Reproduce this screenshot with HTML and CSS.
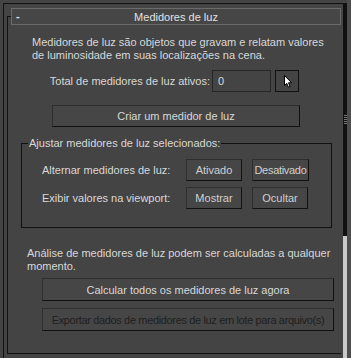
FILE: index.html
```html
<!DOCTYPE html>
<html lang="pt-BR">
<head>
    <meta charset="UTF-8">
    <meta name="viewport" content="width=device-width, initial-scale=1.0">
    <title>Medidores de luz</title>
    <link rel="stylesheet" href="styles.css">
</head>
<body>
    <div class="frame">
        <div class="rollout">
            <div class="rollout-header">
                <span class="toggle">-</span>
                <span class="rollout-title">Medidores de luz</span>
                <span></span>
            </div>

            <p class="info">Medidores de luz são objetos que gravam e relatam valores<br>de luminosidade em suas localizações na cena.</p>

            <div class="count-row">
                <span class="count-label">Total de medidores de luz ativos:</span>
                <div class="spinner">0</div>
                <button class="pick">
                    <svg width="9" height="13" viewBox="0 0 9 13">
                        <path d="M0.5 0.5 L0.5 10.5 L2.8 8.4 L4.4 12.2 L6 11.5 L4.5 7.8 L7.6 7.8 Z" fill="#fff" stroke="#000" stroke-width="1"/>
                    </svg>
                </button>
            </div>

            <button class="btn create">Criar um medidor de luz</button>

            <div class="group">
                <div class="group-label">Ajustar medidores de luz selecionados:</div>
                <div class="group-row">
                    <span class="row-label">Alternar medidores de luz:</span>
                    <button class="btn small">Ativado</button>
                    <button class="btn small tight">Desativado</button>
                </div>
                <div class="group-row">
                    <span class="row-label">Exibir valores na viewport:</span>
                    <button class="btn small">Mostrar</button>
                    <button class="btn small">Ocultar</button>
                </div>
            </div>

            <p class="info bottom">Análise de medidores de luz podem ser calculadas a qualquer<br>momento.</p>

            <button class="btn full">Calcular todos os medidores de luz agora</button>
            <button class="btn full export">Exportar dados de medidores de luz em lote para arquivo(s)</button>
        </div>
    </div>

    <div class="scrollbar">
        <div class="scroll-dark"><div class="grip"></div></div>
        <div class="scroll-light"></div>
    </div>
    <div class="edge"></div>
</body>
</html>
```

FILE: styles.css
```css
body {
    margin: 0;
    width: 351px;
    height: 358px;
    overflow: hidden;
    display: flex;
    background: #444444;
    font-family: "Liberation Sans", Arial, sans-serif;
    font-size: 11px;
    color: #d8d8d8;
}

.frame {
    box-sizing: border-box;
    width: 340px;
    margin: 3px 0 0 3px;
    padding: 12px 0 0 3px;
    border-top: 1px solid #111;
    border-left: 1px solid #111;
}

.rollout {
    box-sizing: border-box;
    width: 334px;
    height: 338px;
    border-top: 1px solid #111;
    border-left: 1px solid #111;
    border-bottom: 1px solid #111;
}

.rollout-header {
    box-sizing: border-box;
    height: 17px;
    margin: -9px 0 0 3px;
    border: 1px solid #6b6b6b;
    background: #464646;
    display: grid;
    grid-template-columns: 1fr auto 1fr;
    align-items: center;
    color: #e2e2e2;
}

.toggle {
    padding-left: 4px;
    font-weight: bold;
    line-height: 13px;
}

.info {
    margin: 11px 0 0 24px;
    line-height: 13px;
}

.count-row {
    display: flex;
    align-items: center;
    height: 22px;
    margin-top: 8px;
}

.count-label {
    flex: none;
    width: 202px;
    margin-right: 2px;
    text-align: right;
    white-space: nowrap;
}

.spinner {
    box-sizing: border-box;
    width: 59px;
    height: 22px;
    padding-left: 5px;
    line-height: 20px;
    border: 1px solid #262626;
}

.pick {
    box-sizing: border-box;
    width: 24px;
    height: 22px;
    margin-left: 4px;
    padding: 4px 0 0 8px;
    border: 1px solid #111;
    background: #444444;
    display: flex;
    align-items: flex-start;
}

.btn {
    display: block;
    box-sizing: border-box;
    height: 22px;
    padding: 0;
    font-family: inherit;
    font-size: 11px;
    color: #d8d8d8;
    background: #464646;
    border: 1px solid;
    border-color: #2e2e2e #111 #111 #2e2e2e;
    white-space: nowrap;
    overflow: hidden;
}

.create {
    width: 248px;
    margin: 13px 0 0 44px;
}

.group {
    box-sizing: border-box;
    width: 311px;
    height: 85px;
    margin: 16px 0 0 13px;
    border: 1px solid #111;
}

.group-label {
    width: max-content;
    margin: -7px 0 0 6px;
    padding: 0 1px;
    line-height: 13px;
    background: #444444;
}

.group-row {
    display: flex;
    align-items: center;
    gap: 10px;
    height: 22px;
    margin-top: 6px;
    padding-left: 20px;
}

.group-label + .group-row {
    margin-top: 9px;
}

.row-label {
    width: 134px;
}

.small {
    width: 56px;
    color: #cfcfcf;
}

.tight {
    width: 57px;
    letter-spacing: -0.3px;
}

.bottom {
    margin: 19px 0 0 19px;
}

.full {
    width: 292px;
    height: 23px;
    margin: 5px 0 0 34px;
}

.export {
    margin-top: 7px;
    color: #1e1e1e;
    letter-spacing: -0.35px;
}

.scrollbar {
    width: 4px;
    margin-top: 3px;
    display: flex;
    flex-direction: column;
}

.scroll-dark {
    height: 233px;
    background: #111;
    display: flex;
    align-items: center;
    justify-content: center;
}

.grip {
    width: 3px;
    height: 10px;
    background: repeating-linear-gradient(to bottom, #777 0 1px, transparent 1px 2px);
}

.scroll-light {
    flex: 1;
    background: #c9c9c9;
}

.edge {
    width: 4px;
    background: #4d4d4d;
}
```
